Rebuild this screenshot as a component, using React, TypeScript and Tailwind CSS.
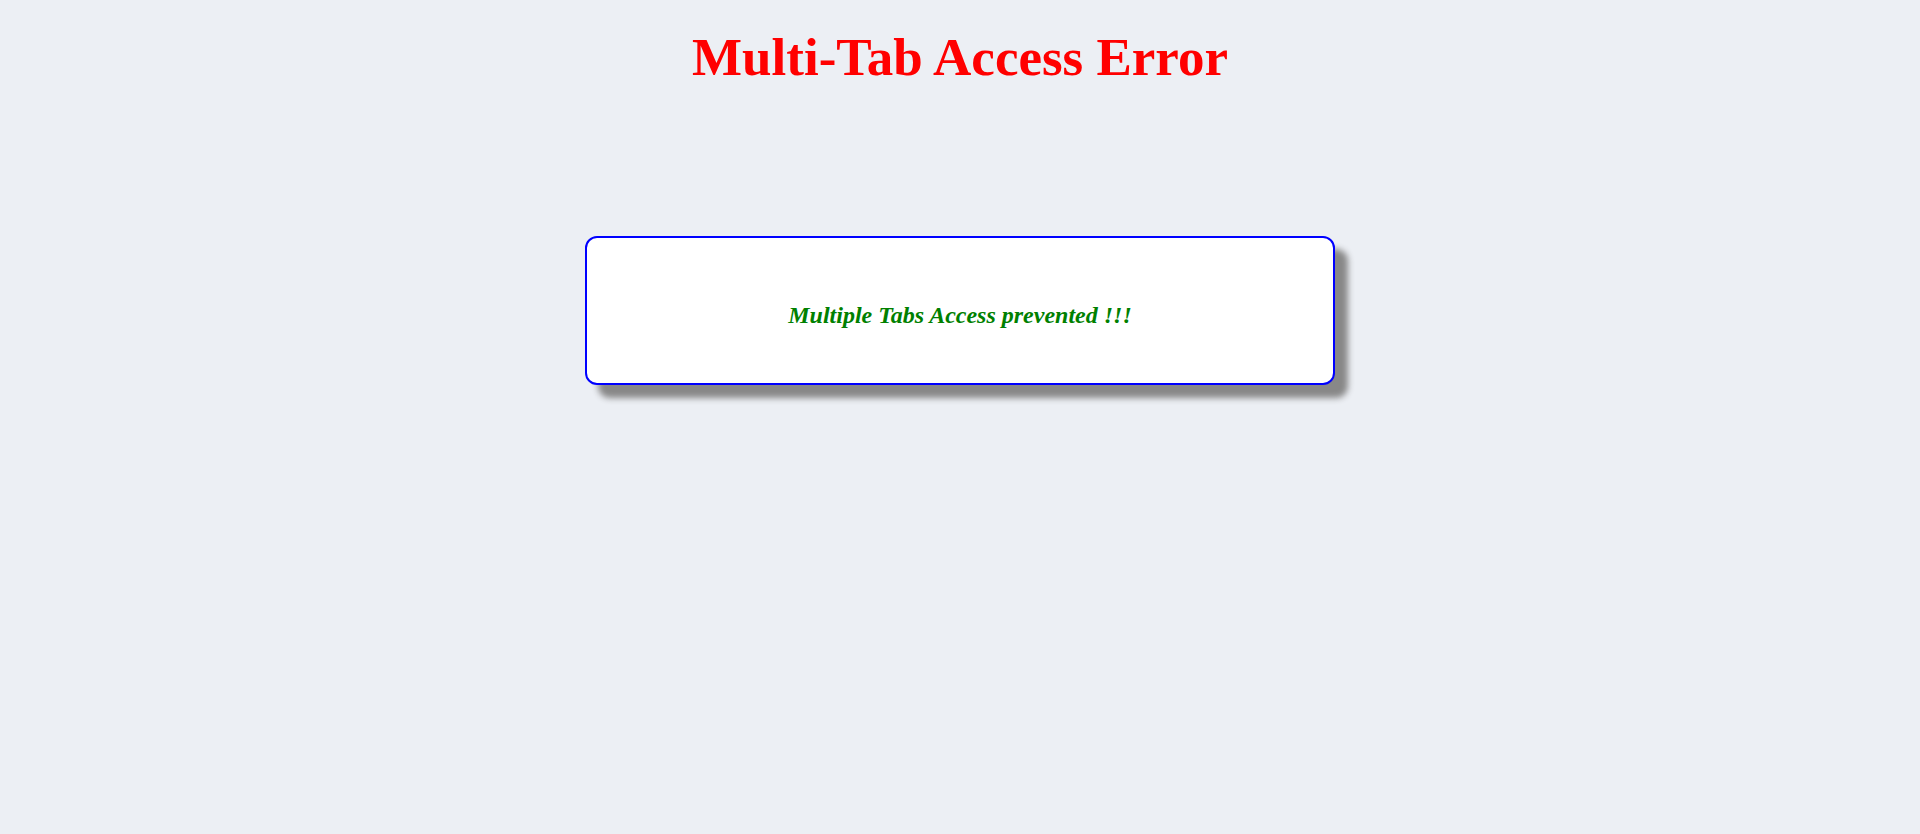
export default function App() {
  return (
    <div className="min-h-[834px] w-full bg-[#eceff4] font-['Liberation_Serif',serif]">
      <div className="flex justify-center pt-[22px]">
        <h1 className="text-[53px] leading-[70px] font-bold text-[#ff0000]">Multi-Tab Access Error</h1>
      </div>
      <div className="mt-[144px] flex justify-center">
        <div className="flex h-[149px] w-[750px] items-center justify-center rounded-[12px] border-2 border-[#0000ff] bg-white shadow-[13px_13px_6px_#888888]">
          <p className="mt-[8px] text-[24px] font-bold italic text-[#008000]">Multiple Tabs Access prevented !!!</p>
        </div>
      </div>
    </div>
  );
}
